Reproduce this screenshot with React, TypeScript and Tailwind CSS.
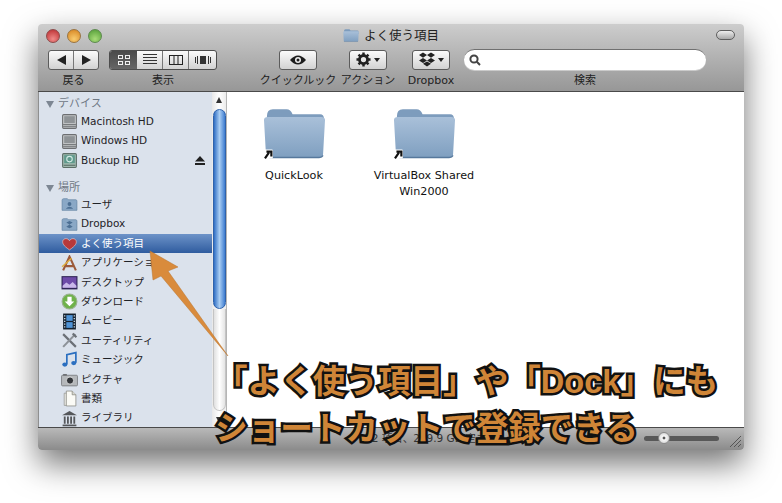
import type { ReactNode } from "react";

function Folder({ size = 16, alias = false }: { size?: number; alias?: boolean }) {
  return (
    <svg width={size} height={size * 0.82} viewBox="0 0 64 52">
      <defs>
        <linearGradient id="fbody" x1="0" y1="0" x2="0" y2="1">
          <stop offset="0" stopColor="#a9c0d9" />
          <stop offset="1" stopColor="#7f9fc0" />
        </linearGradient>
      </defs>
      <path d="M4 8 Q4 1 10 1 H24 Q28 1 30 6 H58 Q62 6 62 11 V20 H4 Z" fill="#7d9cbd" />
      <path d="M1 12 Q1 9 5 9 H59 Q63 9 63 12 L61 47 Q61 50 57 50 H7 Q3 50 3 47 Z" fill="url(#fbody)" />
      <path d="M3 48 Q4 50 7 50 H57 Q60 50 61 48" fill="none" stroke="#56789c" strokeWidth="1.5" />
      {alias && (
        <g>
          <rect x="1" y="42" width="9" height="9" rx="1" fill="#fff" />
          <path d="M2 51 L6 45 M3.5 44 H8.5 V49" fill="none" stroke="#111" strokeWidth="2.2" />
        </g>
      )}
    </svg>
  );
}

function Icon({ children }: { children: ReactNode }) {
  return (
    <svg width="17" height="17" viewBox="0 0 16 16">
      {children}
    </svg>
  );
}

const drive = (
  <Icon>
    <rect x="1.5" y="1.5" width="13" height="13" rx="1" fill="#c4c6c8" stroke="#6d6f72" />
    <rect x="3" y="3" width="10" height="6.5" fill="#8f9396" />
    <path d="M2 11 H14 M2 13 H14" stroke="#54575a" strokeWidth="0.8" />
  </Icon>
);

const sections = [
  {
    title: "デバイス",
    height: "h-[20px] pt-[4px]",
    margin: "",
    items: [
      { label: "Macintosh HD", icon: drive },
      { label: "Windows HD", icon: drive },
      {
        label: "Buckup HD",
        eject: true,
        icon: (
          <Icon>
            <rect x="1.5" y="1.5" width="13" height="13" rx="1" fill="#9fb8ae" stroke="#5d6f68" />
            <rect x="3" y="3" width="10" height="7.5" fill="#5f9a8c" />
            <circle cx="8" cy="6.7" r="2.6" fill="none" stroke="#d6ece6" />
            <path d="M2.5 12.5 H13.5" stroke="#54675f" />
          </Icon>
        ),
      },
    ],
  },
  {
    title: "場所",
    height: "h-[17px] pt-[4px]",
    margin: "mt-[8px]",
    items: [
      {
        label: "ユーザ",
        icon: (
          <Icon>
            <path d="M1 4 Q1 2.5 2.5 2.5 H6 L7 3.5 H14 Q15 3.5 15 5 V13.5 H1 Z" fill="#8aa8c6" stroke="#5f7f9f" strokeWidth="0.6" />
            <circle cx="8" cy="7.5" r="1.8" fill="#4c6f93" />
            <path d="M4.5 12 Q8 8 11.5 12 Z" fill="#4c6f93" />
          </Icon>
        ),
      },
      {
        label: "Dropbox",
        icon: (
          <Icon>
            <path d="M1 4 Q1 2.5 2.5 2.5 H6 L7 3.5 H14 Q15 3.5 15 5 V13.5 H1 Z" fill="#8aa8c6" stroke="#5f7f9f" strokeWidth="0.6" />
            <path d="M5 6 L8 8 L11 6 L8 4.6 Z M5 10 L8 8 L11 10 L8 11.6 Z" fill="#4c6f93" />
          </Icon>
        ),
      },
      {
        label: "よく使う項目",
        selected: true,
        icon: (
          <Icon>
            <path d="M8 14 C2 10 1 7.5 1.8 5.2 C2.7 3 6.5 2.6 8 5.4 C9.5 2.6 13.3 3 14.2 5.2 C15 7.5 14 10 8 14 Z" fill="#b8393a" stroke="#e9c9c9" strokeWidth="0.6" />
          </Icon>
        ),
      },
      {
        label: "アプリケーション",
        icon: (
          <Icon>
            <path d="M2 14.5 L8 1.5 L14 14.5 M4.5 10.5 H11.5" fill="none" stroke="#9c5a3a" strokeWidth="2" />
            <path d="M1 11 L10 3" stroke="#e0b040" strokeWidth="1.4" />
          </Icon>
        ),
      },
      {
        label: "デスクトップ",
        icon: (
          <Icon>
            <rect x="0.5" y="2" width="15" height="12.5" fill="#2e2455" />
            <rect x="1.5" y="3" width="13" height="10" fill="#6d4aa8" />
            <path d="M1.5 11 L5 8 L8 10 L11 7.5 L14.5 11 V13 H1.5 Z" fill="#c9b8ea" />
          </Icon>
        ),
      },
      {
        label: "ダウンロード",
        icon: (
          <Icon>
            <circle cx="8" cy="8" r="7" fill="#6fb24a" stroke="#9ab18f" />
            <path d="M6 3.5 H10 V8 H12.5 L8 12.5 L3.5 8 H6 Z" fill="#fff" />
          </Icon>
        ),
      },
      {
        label: "ムービー",
        icon: (
          <Icon>
            <rect x="2" y="0.5" width="12" height="15" fill="#14202e" />
            <rect x="5" y="2" width="6" height="5.4" fill="#4f93d6" />
            <rect x="5" y="8.6" width="6" height="5.4" fill="#4f93d6" />
            <path d="M3.5 2 V14 M12.5 2 V14" stroke="#cfe0ee" strokeWidth="1.2" strokeDasharray="1.2 1.4" />
          </Icon>
        ),
      },
      {
        label: "ユーティリティ",
        icon: (
          <Icon>
            <path d="M2 2 L14 14" stroke="#6b7076" strokeWidth="2" />
            <path d="M13.5 2 L2 14" stroke="#8d9298" strokeWidth="2" />
            <path d="M11 1.5 L14.5 5" stroke="#6b7076" strokeWidth="2" />
          </Icon>
        ),
      },
      {
        label: "ミュージック",
        icon: (
          <Icon>
            <path d="M5.5 12.5 V3.5 L14 1.5 V11" fill="none" stroke="#2b6fc0" strokeWidth="1.6" />
            <ellipse cx="3.6" cy="12.8" rx="2.4" ry="2" fill="#2b6fc0" />
            <ellipse cx="12" cy="11.4" rx="2.4" ry="2" fill="#2b6fc0" />
          </Icon>
        ),
      },
      {
        label: "ピクチャ",
        icon: (
          <Icon>
            <rect x="0.5" y="4" width="15" height="10" rx="1" fill="#b5b8bb" stroke="#6d7074" strokeWidth="0.7" />
            <rect x="2" y="2.8" width="3.5" height="1.6" fill="#6d7074" />
            <circle cx="8.5" cy="9" r="3.4" fill="#33363a" stroke="#e4e5e6" strokeWidth="0.8" />
          </Icon>
        ),
      },
      {
        label: "書類",
        icon: (
          <Icon>
            <path d="M3 3 H8 L8 14.5 H3 Z" fill="#e9e9e4" stroke="#8a8a84" strokeWidth="0.6" />
            <path d="M5 1 H10.5 L14 4.5 V15 H5 Z" fill="#fbfbf6" stroke="#85857e" strokeWidth="0.7" />
            <path d="M10.5 1 V4.5 H14" fill="#d8d8d0" stroke="#85857e" strokeWidth="0.7" />
          </Icon>
        ),
      },
      {
        label: "ライブラリ",
        icon: (
          <Icon>
            <path d="M1 5 L8 1 L15 5 Z" fill="#55575a" />
            <path d="M3.5 6 V13 M6.5 6 V13 M9.5 6 V13 M12.5 6 V13" stroke="#55575a" strokeWidth="1.7" />
            <path d="M1.5 14.5 H14.5" stroke="#55575a" strokeWidth="1.6" />
          </Icon>
        ),
      },
    ],
  },
];

function Caret() {
  return <span className="ml-[3px] w-0 h-0 border-x-[3.5px] border-x-transparent border-t-[4px] border-t-[#222]" />;
}

function ToolButton({ children }: { children: ReactNode }) {
  return (
    <div className="w-[38px] h-[20px] flex items-center justify-center rounded-[3px] border border-[#5c5c5c] bg-gradient-to-b from-[#fbfbfb] to-[#d2d2d2]">
      {children}
    </div>
  );
}

function ToolGroup({ label, className, children }: { label: string; className: string; children: ReactNode }) {
  return (
    <div className={`flex flex-col items-center ${className}`}>
      <div className="h-[21px] flex items-center justify-center">{children}</div>
      <div className="mt-[1px] text-[11px] leading-[20px] text-[#222] whitespace-nowrap">{label}</div>
    </div>
  );
}

export default function App() {
  return (
    <div className="relative w-[782px] h-[503px] bg-white overflow-hidden [font-family:'DejaVu_Sans','Noto_Sans_CJK_JP',sans-serif]">
      <div className="pt-[24px] pl-[38px]">
        <div className="w-[706px] h-[426px] flex flex-col rounded-[4px] overflow-hidden shadow-[0_14px_32px_rgba(0,0,0,0.55)]">
          {/* Title and toolbar */}
          <div className="h-[68px] shrink-0 bg-gradient-to-b from-[#cdcdcd] to-[#979797] border-b border-[#4a4a4a]">
            <div className="relative h-[24px] flex items-center justify-center gap-[4px]">
              <div className="absolute left-[8px] top-[5px] flex gap-[7px]">
                <span className="w-[14px] h-[14px] rounded-full bg-[radial-gradient(circle_at_50%_75%,#f08a88,#b8292c)] border border-[#8d4a4a]" />
                <span className="w-[14px] h-[14px] rounded-full bg-[radial-gradient(circle_at_50%_75%,#f8cc70,#d5801c)] border border-[#9a7440]" />
                <span className="w-[14px] h-[14px] rounded-full bg-[radial-gradient(circle_at_50%_75%,#a8dc78,#4f9a34)] border border-[#5d8a4e]" />
              </div>
              <Folder size={16} />
              <span className="text-[12.5px] text-[#222] ml-[1px]">よく使う項目</span>
              <span className="absolute right-[9px] top-[6px] w-[19px] h-[10px] rounded-full border border-[#5e5e5e] bg-gradient-to-b from-[#eeeeee] to-[#a8a8a8]" />
            </div>

            <div className="flex pl-[10px] pt-[1px]">
              <ToolGroup label="戻る" className="w-[51px]">
                <div className="w-[51px] h-[20px] flex rounded-[3px] border border-[#5c5c5c] bg-gradient-to-b from-[#fbfbfb] to-[#d2d2d2]">
                  <div className="flex-1 flex items-center justify-center border-r border-[#777]">
                    <span className="w-0 h-0 border-y-[5px] border-y-transparent border-r-[9px] border-r-[#222]" />
                  </div>
                  <div className="flex-1 flex items-center justify-center">
                    <span className="w-0 h-0 border-y-[5px] border-y-transparent border-l-[9px] border-l-[#222]" />
                  </div>
                </div>
              </ToolGroup>

              <ToolGroup label="表示" className="w-[108px] ml-[10px]">
                <div className="w-[108px] h-[20px] flex rounded-[3px] border border-[#4d4d4d] overflow-hidden bg-gradient-to-b from-[#fbfbfb] to-[#d2d2d2]">
                  <div className="w-[27px] flex items-center justify-center bg-gradient-to-b from-[#4a4a4a] to-[#666]">
                    <svg width="12" height="10" viewBox="0 0 12 10" fill="none" stroke="#eee">
                      <rect x="0.5" y="0.5" width="4" height="3" />
                      <rect x="7.5" y="0.5" width="4" height="3" />
                      <rect x="0.5" y="6.5" width="4" height="3" />
                      <rect x="7.5" y="6.5" width="4" height="3" />
                    </svg>
                  </div>
                  <div className="w-[26px] flex items-center justify-center border-r border-[#777]">
                    <svg width="14" height="11" viewBox="0 0 14 11" stroke="#333">
                      <path d="M0 0.5 H14 M0 3.5 H14 M0 6.5 H14 M0 9.5 H14" />
                    </svg>
                  </div>
                  <div className="w-[26px] flex items-center justify-center border-r border-[#777]">
                    <svg width="14" height="10" viewBox="0 0 14 10" fill="none" stroke="#222">
                      <rect x="0.5" y="0.5" width="13" height="9" />
                      <path d="M5 0 V10 M9 0 V10" />
                    </svg>
                  </div>
                  <div className="flex-1 flex items-center justify-center">
                    <svg width="16" height="10" viewBox="0 0 16 10" fill="#333">
                      <rect x="5" y="1" width="6" height="8" />
                      <path d="M0.5 2 V8 M2.5 1 V9 M13.5 1 V9 M15.5 2 V8" stroke="#333" />
                    </svg>
                  </div>
                </div>
              </ToolGroup>

              <ToolGroup label="クイックルック" className="w-[74px] ml-[44px]">
                <ToolButton>
                  <svg width="18" height="12" viewBox="0 0 18 12">
                    <path d="M1 6 Q9 -3 17 6 Q9 15 1 6 Z" fill="#1d1d1d" />
                    <circle cx="9" cy="6" r="3" fill="#eee" />
                    <circle cx="9" cy="6" r="1.5" fill="#1d1d1d" />
                  </svg>
                </ToolButton>
              </ToolGroup>

              <ToolGroup label="アクション" className="w-[56px] ml-[5px]">
                <ToolButton>
                  <svg width="15" height="15" viewBox="0 0 16 16">
                    <circle cx="8" cy="8" r="4.3" fill="none" stroke="#222" strokeWidth="3" />
                    <path d="M8 0.5 V15.5 M0.5 8 H15.5 M2.7 2.7 L13.3 13.3 M13.3 2.7 L2.7 13.3" stroke="#222" strokeWidth="2.6" strokeDasharray="3 9 3" />
                  </svg>
                  <Caret />
                </ToolButton>
              </ToolGroup>

              <ToolGroup label="Dropbox" className="w-[58px] ml-[6px]">
                <ToolButton>
                  <svg width="16" height="15" viewBox="0 0 16 15" fill="#222">
                    <path d="M4 0.5 L8 3 L4 5.7 L0 3 Z M12 0.5 L16 3 L12 5.7 L8 3 Z M4 5.9 L8 8.5 L4 11 L0 8.5 Z M12 5.9 L16 8.5 L12 11 L8 8.5 Z M4 11.8 L8 9.4 L12 11.8 L8 14.5 Z" />
                  </svg>
                  <Caret />
                </ToolButton>
              </ToolGroup>

              <ToolGroup label="検索" className="w-[242px] ml-[4px]">
                <div className="w-[242px] h-[21px] flex items-center pl-[5px] rounded-full bg-white border-t border-[#707070] shadow-[0_1px_0_rgba(255,255,255,0.4)]">
                  <svg width="12" height="12" viewBox="0 0 12 12" fill="none" stroke="#444" strokeWidth="2">
                    <circle cx="5" cy="5" r="3.6" />
                    <path d="M7.8 7.8 L11 11" />
                  </svg>
                </div>
              </ToolGroup>
            </div>
          </div>

          {/* Sidebar, scrollbar, files */}
          <div className="flex-1 min-h-0 flex bg-white">
            <div className="w-[174px] overflow-hidden bg-[#dbe2ec] border-l border-[#8f8f8f]">
              {sections.map((section) => (
                <div key={section.title} className={section.margin}>
                  <div className={`${section.height} flex items-center pl-[7px] gap-[4px] text-[11px] text-[#6f7884]`}>
                    <span className="w-0 h-0 border-x-[4px] border-x-transparent border-t-[7px] border-t-[#7d8793]" />
                    {section.title}
                  </div>
                  {section.items.map((item) => (
                    <div
                      key={item.label}
                      className={`h-[19.4px] flex items-center pl-[22px] gap-[3px] whitespace-nowrap text-[10.5px] ${
                        item.selected
                          ? "bg-gradient-to-b from-[#6d93c8] to-[#2f5c9f] text-white"
                          : "text-[#1f2227]"
                      }`}
                    >
                      <span className="w-[17px] h-[17px] shrink-0">{item.icon}</span>
                      <span className="flex-1">{item.label}</span>
                      {item.eject && (
                        <svg className="mr-[7px]" width="10" height="9" viewBox="0 0 10 9" fill="#222">
                          <path d="M5 0 L10 5.5 H0 Z" />
                          <rect y="7" width="10" height="2" />
                        </svg>
                      )}
                    </div>
                  ))}
                </div>
              ))}
            </div>

            <div className="w-[15px] shrink-0 flex flex-col items-center bg-gradient-to-r from-[#e8e8e8] via-white to-[#ececec] border-r border-[#b5b5b5]">
              <span className="mt-[5px] mb-[6px] w-0 h-0 border-x-[3.5px] border-x-transparent border-b-[6px] border-b-[#333]" />
              <div className="w-[13px] h-[200px] rounded-full border border-[#2f62ab] bg-gradient-to-r from-[#2f6fc4] via-[#a9cdf2] to-[#3d7cd0]" />
              <div className="w-[13px] h-[102px] rounded-b-full border border-t-0 border-[#c4c4c4] bg-gradient-to-r from-[#e0e0e0] via-white to-[#e4e4e4]" />
              <span className="mt-[6px] w-0 h-0 border-x-[3.5px] border-x-transparent border-t-[6px] border-t-[#333]" />
            </div>

            <div className="flex-1 flex items-start pl-[2px] pt-[16px]">
              <div className="w-[130px] flex flex-col items-center text-[11.2px] leading-[16px] text-[#111]">
                <Folder size={63} alias />
                <div className="mt-[8px]">QuickLook</div>
              </div>
              <div className="w-[130px] flex flex-col items-center text-center text-[11.2px] leading-[16px] text-[#111]">
                <Folder size={63} alias />
                <div className="mt-[8px] whitespace-nowrap">VirtualBox Shared</div>
                <div>Win2000</div>
              </div>
            </div>
          </div>

          {/* Status bar */}
          <div className="h-[23px] shrink-0 relative flex items-center justify-center border-t border-[#4a4a4a] bg-gradient-to-b from-[#b9b9b9] to-[#8b8b8b]">
            <span className="pl-[76px] text-[10.5px] text-[#333]">2 項目、209.9 GB 空き</span>
            <div className="absolute right-[25px] top-[8px] w-[75px] h-[5px] rounded-full bg-[#585858]" />
            <div className="absolute right-[74px] top-[4px] w-[12px] h-[12px] rounded-full border border-[#8a8a8a] bg-[radial-gradient(circle,#555_18%,#fafafa_24%,#c8c8c8_100%)]" />
            <svg className="absolute right-[3px] bottom-[3px]" width="12" height="12" viewBox="0 0 12 12" stroke="#555">
              <path d="M1 12 L12 1 M5 12 L12 5 M9 12 L12 9" />
            </svg>
          </div>
        </div>
      </div>

      {/* Callout arrow */}
      <svg className="absolute left-0 top-0 pointer-events-none" width="782" height="503" viewBox="0 0 782 503">
        <path d="M150 251 L178 267 L168 271 L228 356 L161 276 L153 280 Z" fill="#d98b3c" stroke="#b8752f" strokeWidth="0.5" />
      </svg>

      {/* Callout text */}
      <div className="absolute left-[215px] top-[360px] text-[32.6px] leading-[44px] font-bold whitespace-nowrap text-[#cf8537] [font-family:'Liberation_Sans','Noto_Sans_CJK_JP',sans-serif] [-webkit-text-stroke:5px_#111] [paint-order:stroke_fill]">
        「よく使う項目」や「Dock」にも
      </div>
      <div className="absolute left-[215px] top-[407px] text-[32.6px] leading-[44px] font-bold whitespace-nowrap text-[#cf8537] [font-family:'Liberation_Sans','Noto_Sans_CJK_JP',sans-serif] [-webkit-text-stroke:5px_#111] [paint-order:stroke_fill]">
        ショートカットで登録できる
      </div>
    </div>
  );
}
